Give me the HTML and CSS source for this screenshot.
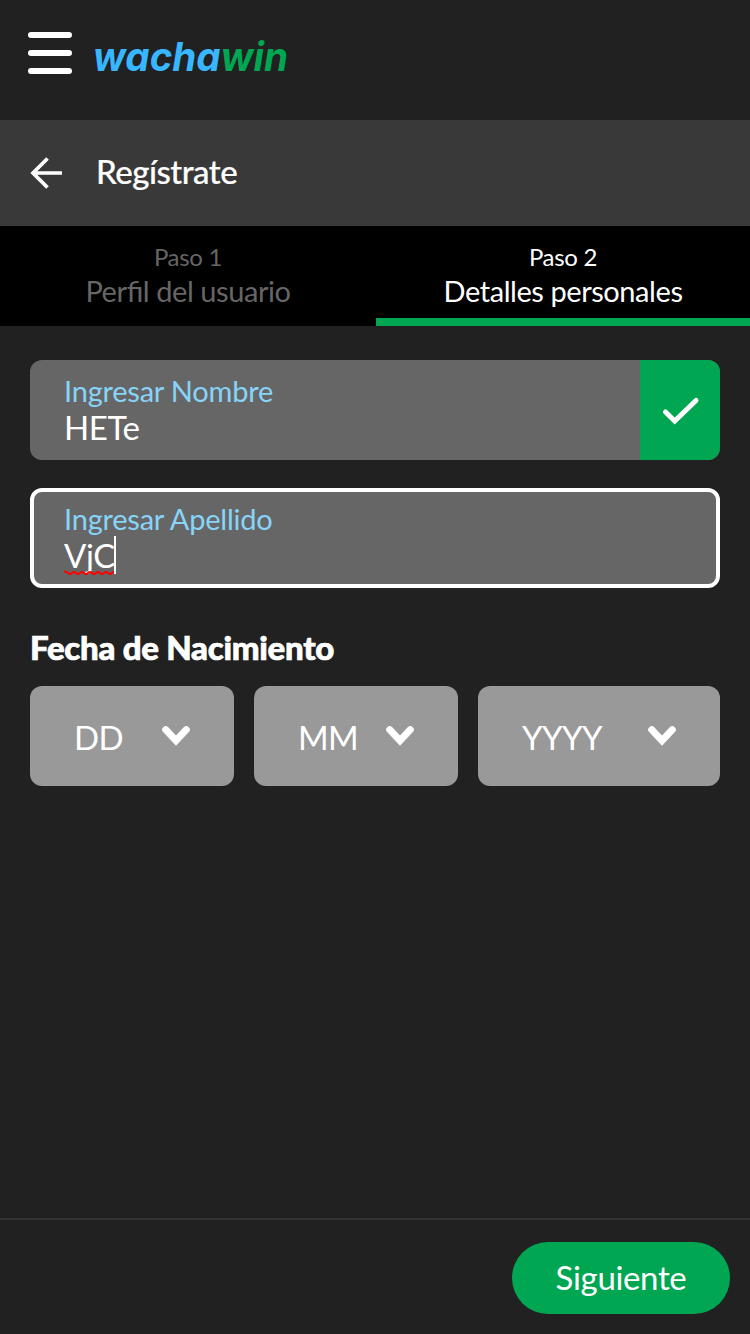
FILE: index.html
```html
<!DOCTYPE html>
<html lang="es">
<head>
<meta charset="utf-8">
<title>Regístrate</title>
<link rel="stylesheet" href="styles.css">
</head>
<body>
<div class="page">
  <header class="topbar">
    <div class="menu"><span class="menu-line"></span><span class="menu-line"></span><span class="menu-line"></span></div>
    <svg class="logo" width="200" height="50" viewBox="0 0 200 50">
      <text class="logo-text" x="0" y="37.5" textLength="195" lengthAdjust="spacingAndGlyphs"><tspan class="logo-blue">wacha</tspan><tspan class="logo-green">win</tspan></text>
    </svg>
  </header>
  <div class="titlebar">
    <svg class="back" width="34" height="34" viewBox="0 0 34 34"><path d="M17.5 2.5 3 17 17.5 31.5M3 17H32" fill="none" stroke="#fff" stroke-width="3.7"/></svg>
    <h1 class="title">Regístrate</h1>
  </div>
  <nav class="tabs">
    <div class="tab"><span class="step">Paso 1</span><span class="step-name">Perfil del usuario</span></div>
    <div class="tab tab-active"><span class="step">Paso 2</span><span class="step-name">Detalles personales</span></div>
  </nav>
  <main class="form">
    <div class="field">
      <div class="field-body"><span class="label">Ingresar Nombre</span><span class="value">HETe</span></div>
      <div class="valid"><svg width="40" height="32" viewBox="0 0 40 32"><path d="M5.5 18 14.7 27 36 6.5" fill="none" stroke="#fff" stroke-width="5" stroke-linecap="round"/></svg></div>
    </div>
    <div class="field field-focus">
      <div class="field-body"><span class="label">Ingresar Apellido</span>
        <span class="value"><span class="typed">VjC<svg class="squiggle" width="51" height="5" viewBox="0 0 51 5"><path d="M0 1.5Q2 1 4 3T8 3T12 3T16 3T20 3T24 3T28 3T32 3T36 3T40 3T44 3T48 3T52 3" fill="none" stroke="#f00" stroke-width="2"/></svg><span class="caret"></span></span></span>
      </div>
    </div>
    <h2 class="section">Fecha de Nacimiento</h2>
    <div class="selects">
      <div class="select"><span>DD</span><svg width="30" height="22" viewBox="0 0 30 22"><path d="M4.7 4.7 15 15.7 25.3 4.7" fill="none" stroke="#fff" stroke-width="7" stroke-linecap="round"/></svg></div>
      <div class="select"><span>MM</span><svg width="30" height="22" viewBox="0 0 30 22"><path d="M4.7 4.7 15 15.7 25.3 4.7" fill="none" stroke="#fff" stroke-width="7" stroke-linecap="round"/></svg></div>
      <div class="select"><span>YYYY</span><svg width="30" height="22" viewBox="0 0 30 22"><path d="M4.7 4.7 15 15.7 25.3 4.7" fill="none" stroke="#fff" stroke-width="7" stroke-linecap="round"/></svg></div>
    </div>
  </main>
  <footer class="footer"><button class="next">Siguiente</button></footer>
</div>
</body>
</html>
```
FILE: styles.css
```css
* { box-sizing: border-box; }
body { margin: 0; background: #212121; color: #fff; font-family: Lato, "Liberation Sans", sans-serif; }
svg { display: block; }
.page { height: 1334px; display: flex; flex-direction: column; }
.topbar { height: 120px; display: flex; align-items: flex-start; gap: 20px; padding: 32px 28px 0; }
.menu { width: 44px; display: flex; flex-direction: column; gap: 11.6px; }
.menu-line { height: 6.4px; border-radius: 3.2px; background: #fff; }
.logo { margin-top: 1px; margin-left: 1px; }
.logo-text { font: italic 700 40px Inter, sans-serif; }
.logo-blue { fill: #38b6ff; }
.logo-green { fill: #00a651; }
.titlebar { height: 106px; background: #393939; display: flex; align-items: center; gap: 32px; padding: 0 30px; }
.title { margin: 0; font-size: 33px; font-weight: 500; line-height: 40px; padding-bottom: 5px; letter-spacing: -.5px; -webkit-text-stroke: .2px #fff; }
.tabs { height: 100px; background: #000; display: grid; grid-template-columns: 376px 1fr; }
.tab { display: flex; flex-direction: column; align-items: center; padding-top: 16px; color: #666; }
.tab-active { color: #fff; border-bottom: 8px solid #00a651; }
.step { font-size: 24px; line-height: 30px; letter-spacing: -.3px; }
.step-name { font-size: 29px; line-height: 38px; letter-spacing: -.43px; font-feature-settings: "liga" 1; }
.form { flex: 1; padding: 34px 30px 0; }
.field { height: 100px; display: flex; background: #666; border-radius: 12px; overflow: hidden; margin-bottom: 28px; }
.field-body { flex: 1; display: flex; flex-direction: column; padding: 13px 0 0 34px; }
.field-focus { border: 4px solid #fff; }
.field-focus .field-body { padding: 9px 0 0 30px; }
.label { font-size: 29px; line-height: 36px; color: #88d4f8; letter-spacing: -.22px; }
.value { font-size: 33px; line-height: 36px; letter-spacing: -.4px; }
.typed { position: relative; }
.squiggle { position: absolute; left: 0; bottom: 0; }
.caret { position: absolute; right: -1px; top: 1px; width: 2px; height: 38px; background: #fff; }
.valid { width: 80px; background: #00a651; display: grid; place-items: center; }
.section { margin: 39px 0 0; font-size: 33px; font-weight: 900; line-height: 40px; letter-spacing: -.27px; -webkit-text-stroke: .7px #fff; }
.selects { display: grid; grid-template-columns: 204px 204px 242px; gap: 20px; margin-top: 19px; }
.select { height: 100px; border-radius: 12px; background: #999; display: flex; align-items: center; justify-content: space-between; padding: 2px 43px 0 44px; font-size: 33px; line-height: 40px; letter-spacing: -.6px; }
.select svg { margin-bottom: 2px; }
.footer { height: 116px; border-top: 2px solid #333; display: flex; justify-content: flex-end; padding: 22px 20px; }
.next { width: 218px; height: 72px; border: 0; border-radius: 36px; padding: 0 0 2px; background: #00a651; color: #fff; font: 400 33px/40px Lato, sans-serif; letter-spacing: -.35px; }
```
